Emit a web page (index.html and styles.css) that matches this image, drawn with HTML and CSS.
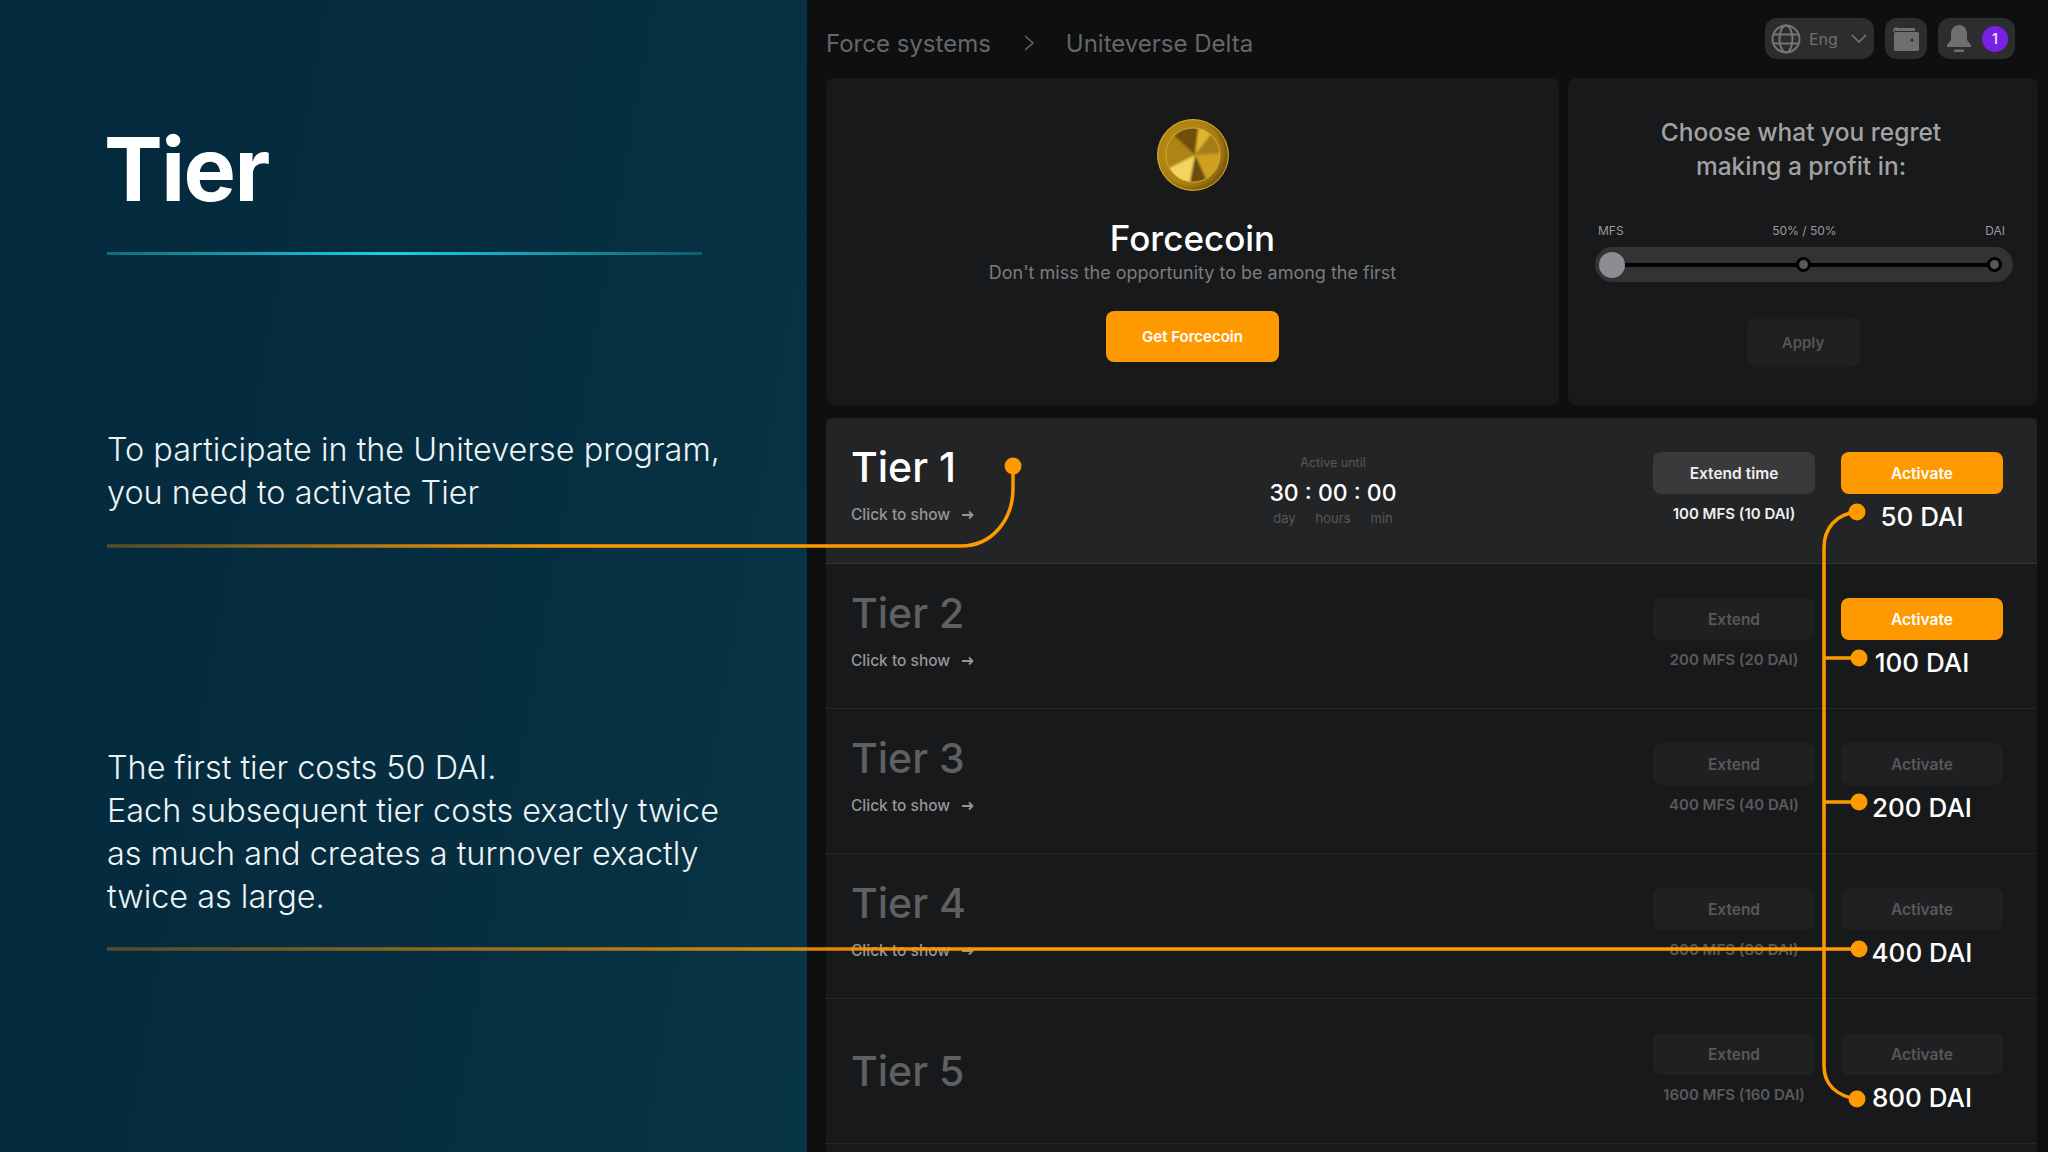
FILE: index.html
```html
<!DOCTYPE html>
<html lang="en">
<head>
<meta charset="utf-8">
<title>Tier</title>
<link rel="stylesheet" href="styles.css">
</head>
<body>
<div class="page">
  <aside class="intro">
    <h1 class="intro-title">Tier</h1>
    <div class="intro-rule"></div>
    <p class="intro-text intro-text-first">To participate in the Uniteverse program,<br>you need to activate Tier</p>
    <p class="intro-text intro-text-second">The first tier costs 50 DAI.<br>Each subsequent tier costs exactly twice<br>as much and creates a turnover exactly<br>twice as large.</p>
  </aside>

  <main class="app">
    <header class="topbar">
      <nav class="crumbs">
        <span class="crumb crumb-first">Force systems</span>
        <svg class="crumb-sep" viewBox="0 0 12 16" width="12" height="16"><path d="M2 1l8 7-8 7" fill="none" stroke="#666" stroke-width="1.5"/></svg>
        <span class="crumb">Uniteverse Delta</span>
      </nav>
      <div class="tools">
        <div class="tool tool-lang">
          <svg viewBox="0 0 30 30" width="30" height="30" fill="none" stroke="#757575" stroke-width="2"><circle cx="15" cy="15" r="13.5"/><ellipse cx="15" cy="15" rx="6.5" ry="13.5"/><path d="M2.500 10.500h25M2.500 19.500h25"/></svg>
          <span class="lang-label">Eng</span>
          <svg viewBox="0 0 16 10" width="16" height="10"><path d="M1 1l7 7 7-7" fill="none" stroke="#757575" stroke-width="1.6"/></svg>
        </div>
        <div class="tool tool-wallet">
          <svg viewBox="0 0 26 24" width="26" height="24"><path d="M3 1h19v3H3z" fill="#6f6f6f"/><rect x="1" y="5" width="25" height="19" rx="1.5" fill="#6f6f6f"/><path d="M1 4.500C1 2 2 1 4 1" fill="none" stroke="#6f6f6f" stroke-width="2"/><circle cx="19" cy="13" r="1.6" fill="#2c2d2e"/></svg>
        </div>
        <div class="tool tool-bell">
          <svg viewBox="0 0 24 27" width="24" height="27"><path d="M12 0c5 0 8 4 8 9v6l4 5v2H0v-2l4-5V9c0-5 3-9 8-9z" fill="#6f6f6f"/><rect x="7" y="24.500" width="10" height="2.500" rx="1" fill="#6f6f6f"/></svg>
          <span class="badge">1</span>
        </div>
      </div>
    </header>

    <section class="cards">
      <article class="card card-coin">
        <svg class="coin" viewBox="0 0 72 72" width="72" height="72">
          <defs>
            <radialGradient id="coinFill" cx="42%" cy="45%" r="62%">
              <stop offset="0" stop-color="#c79a1c"/>
              <stop offset=".72" stop-color="#ab8012"/>
              <stop offset="1" stop-color="#5f4405"/>
            </radialGradient>
            <clipPath id="coinInner"><circle cx="36" cy="36" r="27"/></clipPath>
            <filter id="coinSoft" x="-10%" y="-10%" width="120%" height="120%"><feGaussianBlur stdDeviation="1.3"/></filter>
          </defs>
          <circle cx="36" cy="36" r="36" fill="url(#coinFill)"/>
          <g clip-path="url(#coinInner)">
            <rect x="6" y="6" width="60" height="60" fill="#a87e14"/>
            <g filter="url(#coinSoft)">
              <path d="M38 36L14 14l8-10h20z" fill="#6f5008"/>
              <path d="M38 36l4-32 16 6z" fill="#e0b330"/>
              <path d="M38 36l20-26 8 24z" fill="#a67c14"/>
              <path d="M38 36l28-2-2 26-14 2z" fill="#cda024"/>
              <path d="M38 36l12 26-8 6H32z" fill="#6b4d08"/>
              <path d="M38 36L32 68 8 56l6-8z" fill="#f3d45f"/>
              <path d="M38 36L14 48l-10-8V20l10-6z" fill="#ad8418"/>
            </g>
          </g>
          <circle cx="36" cy="36" r="35.300" fill="none" stroke="#d9ac38" stroke-width="1"/>
          <circle cx="36" cy="36" r="27" fill="none" stroke="#dcb040" stroke-width=".8"/>
        </svg>
        <h2 class="coin-name">Forcecoin</h2>
        <p class="coin-sub">Don't miss the opportunity to be among the first</p>
        <button class="btn btn-get">Get Forcecoin</button>
      </article>

      <article class="card card-split">
        <h2 class="split-title">Choose what you regret<br>making a profit in:</h2>
        <div class="split-labels"><span>MFS</span><span>50% / 50%</span><span>DAI</span></div>
        <div class="slider">
          <div class="slider-line">
            <span class="knob"></span>
            <span class="stop stop-mid"></span>
            <span class="stop stop-end"></span>
          </div>
        </div>
        <button class="btn btn-apply">Apply</button>
      </article>
    </section>

    <section class="tiers">
      <div class="tier tier-active">
        <div class="tier-info">
          <h3 class="tier-name">Tier 1</h3>
          <div class="show">Click to show <svg viewBox="0 0 12 10" width="12" height="10"><path d="M0 5h10M7 1.500L10.500 5 7 8.500" fill="none" stroke="currentColor" stroke-width="1.800"/></svg></div>
        </div>
        <div class="timer">
          <div class="timer-cap">Active until</div>
          <div class="timer-value">30 : 00 : 00</div>
          <div class="timer-units"><span>day</span><span>hours</span><span>min</span></div>
        </div>
        <div class="col col-extend">
          <button class="btn btn-row btn-extend-on">Extend time</button>
          <div class="price price-on">100 MFS (10 DAI)</div>
        </div>
        <div class="col col-activate">
          <button class="btn btn-row btn-on">Activate</button>
          <div class="dai">50 DAI</div>
        </div>
      </div>

      <div class="tier">
        <div class="tier-info">
          <h3 class="tier-name">Tier 2</h3>
          <div class="show">Click to show <svg viewBox="0 0 12 10" width="12" height="10"><path d="M0 5h10M7 1.500L10.500 5 7 8.500" fill="none" stroke="currentColor" stroke-width="1.800"/></svg></div>
        </div>
        <div class="col col-extend">
          <button class="btn btn-row btn-off">Extend</button>
          <div class="price">200 MFS (20 DAI)</div>
        </div>
        <div class="col col-activate">
          <button class="btn btn-row btn-on">Activate</button>
          <div class="dai">100 DAI</div>
        </div>
      </div>

      <div class="tier">
        <div class="tier-info">
          <h3 class="tier-name">Tier 3</h3>
          <div class="show">Click to show <svg viewBox="0 0 12 10" width="12" height="10"><path d="M0 5h10M7 1.500L10.500 5 7 8.500" fill="none" stroke="currentColor" stroke-width="1.800"/></svg></div>
        </div>
        <div class="col col-extend">
          <button class="btn btn-row btn-off">Extend</button>
          <div class="price">400 MFS (40 DAI)</div>
        </div>
        <div class="col col-activate">
          <button class="btn btn-row btn-off">Activate</button>
          <div class="dai">200 DAI</div>
        </div>
      </div>

      <div class="tier">
        <div class="tier-info">
          <h3 class="tier-name">Tier 4</h3>
          <div class="show">Click to show <svg viewBox="0 0 12 10" width="12" height="10"><path d="M0 5h10M7 1.500L10.500 5 7 8.500" fill="none" stroke="currentColor" stroke-width="1.800"/></svg></div>
        </div>
        <div class="col col-extend">
          <button class="btn btn-row btn-off">Extend</button>
          <div class="price">800 MFS (80 DAI)</div>
        </div>
        <div class="col col-activate">
          <button class="btn btn-row btn-off">Activate</button>
          <div class="dai">400 DAI</div>
        </div>
      </div>

      <div class="tier">
        <div class="tier-info tier-info-solo">
          <h3 class="tier-name">Tier 5</h3>
        </div>
        <div class="col col-extend">
          <button class="btn btn-row btn-off">Extend</button>
          <div class="price">1600 MFS (160 DAI)</div>
        </div>
        <div class="col col-activate">
          <button class="btn btn-row btn-off">Activate</button>
          <div class="dai">800 DAI</div>
        </div>
      </div>
    </section>
  </main>

  <svg class="wires" viewBox="0 0 2048 1152" width="2048" height="1152" fill="none">
    <defs>
      <linearGradient id="wireA" gradientUnits="userSpaceOnUse" x1="107" y1="0" x2="560" y2="0">
        <stop offset="0" stop-color="#ff9900" stop-opacity=".3"/>
        <stop offset="1" stop-color="#ff9900"/>
      </linearGradient>
      <linearGradient id="wireB" gradientUnits="userSpaceOnUse" x1="107" y1="0" x2="1000" y2="0">
        <stop offset="0" stop-color="#ff9900" stop-opacity=".3"/>
        <stop offset="1" stop-color="#ff9900"/>
      </linearGradient>
    </defs>
    <path d="M107 546H961C992 546 1013 520 1013 488V466" stroke="url(#wireA)" stroke-width="3.500"/>
    <path d="M107 949H1859" stroke="url(#wireB)" stroke-width="3.500"/>
    <path d="M1857 512C1836 514 1824 528 1824 548V1066C1824 1084 1836 1096 1857 1099" stroke="#ff9900" stroke-width="3.500"/>
    <path d="M1824 658H1859M1824 802H1859" stroke="#ff9900" stroke-width="3.500"/>
    <g fill="#ff9900">
      <circle cx="1013" cy="466" r="8.500"/>
      <circle cx="1857" cy="512" r="8.500"/>
      <circle cx="1859" cy="658" r="8.500"/>
      <circle cx="1859" cy="802" r="8.500"/>
      <circle cx="1859" cy="949" r="8.500"/>
      <circle cx="1857" cy="1099" r="8.500"/>
    </g>
  </svg>
</div>
</body>
</html>
```

FILE: styles.css
```css
* { box-sizing: border-box; }

html, body {
  margin: 0;
  padding: 0;
  width: 2048px;
  height: 1152px;
  overflow: hidden;
  background: #0e0f11;
  font-family: Inter, "Liberation Sans", sans-serif;
}

h1, h2, h3, p { margin: 0; font-weight: normal; }

.page {
  position: relative;
  display: flex;
  width: 2048px;
  height: 1152px;
}

/* Left intro panel */
.intro {
  width: 807px;
  flex: none;
  padding: 121px 0 0 107px;
  background: linear-gradient(100deg, #04293c 0%, #062d40 55%, #083546 100%);
  color: #fff;
}

.intro-title {
  margin-left: -3px;
  font-size: 88px;
  line-height: 96px;
  font-weight: 700;
  letter-spacing: -1.500px;
}

.intro-rule {
  width: 595px;
  height: 3px;
  margin-top: 35px;
  background: linear-gradient(90deg, #0f6d7c 0%, #19d2e8 48%, #0e5f6e 100%);
}

.intro-text {
  font-size: 32.400px;
  line-height: 43px;
  font-weight: 300;
  color: #eef4f6;
}

.intro-text-first { margin-top: 173px; }
.intro-text-second { margin-top: 232px; }

/* Application side */
.app {
  width: 1241px;
  flex: none;
  display: flex;
  flex-direction: column;
  padding-left: 19px;
}

.topbar {
  height: 78px;
  display: flex;
  justify-content: space-between;
  padding: 18px 33px 0 0;
}

.crumbs {
  display: flex;
  align-items: center;
  height: 50px;
  font-size: 24px;
  color: #666768;
}

.crumb-sep { margin: 0 31px 0 32px; }

.tools {
  display: flex;
  gap: 11px;
  height: 41px;
}

.tool {
  display: flex;
  align-items: center;
  border-radius: 12px;
  background: #2c2d2e;
}

.tool-lang { width: 109px; padding-left: 6px; }
.lang-label { margin: 0 12px 0 8px; font-size: 16px; color: #6f6f6f; width: 30px; }
.tool-wallet { width: 42px; justify-content: center; }
.tool-bell { width: 77px; padding-left: 9px; gap: 11px; }

.badge {
  width: 26px;
  height: 26px;
  border-radius: 50%;
  background: #7a1fe6;
  color: #e8dcf8;
  font-size: 14px;
  font-weight: 600;
  line-height: 26px;
  text-align: center;
}

.cards {
  display: flex;
  gap: 9px;
  height: 327px;
}

.card {
  background: #18191b;
  border-radius: 8px;
  display: flex;
  flex-direction: column;
  align-items: center;
}

.card-coin { width: 733px; padding-top: 41px; }
.card-split { width: 470px; padding-top: 37px; }

.coin { display: block; }

.coin-name {
  margin-top: 25px;
  font-size: 35px;
  line-height: 44px;
  font-weight: 500;
  color: #fff;
}

.coin-sub {
  margin-top: 0;
  font-size: 18px;
  line-height: 26px;
  color: #7b7c7d;
}

.btn {
  display: block;
  border: 0;
  border-radius: 8px;
  padding: 0;
  font-family: inherit;
  font-size: 15px;
  font-weight: 600;
  text-align: center;
}

.btn-get {
  width: 173px;
  height: 51px;
  margin-top: 25px;
  background: #ff9900;
  color: #fff;
}

.split-title {
  margin-left: -4px;
  font-size: 24.500px;
  line-height: 34px;
  font-weight: 500;
  text-align: center;
  color: #a2a2a3;
}

.split-labels {
  display: flex;
  justify-content: space-between;
  align-self: stretch;
  margin: 40px 33px 0 30px;
  font-size: 12px;
  line-height: 16px;
  color: #9a9a9b;
}

.slider {
  align-self: stretch;
  height: 35px;
  margin: 8px 25px 0 27px;
  padding: 0 18px;
  border-radius: 18px;
  background: #333335;
  display: flex;
  align-items: center;
}

.slider-line {
  flex: 1;
  height: 4px;
  background: #000;
  display: flex;
  justify-content: space-between;
  align-items: center;
}

.knob {
  width: 26px;
  height: 26px;
  margin-left: -14px;
  border-radius: 50%;
  background: #8d8c90;
}

.stop {
  width: 15px;
  height: 15px;
  border-radius: 50%;
  border: 3px solid #000;
  background: #58585a;
}

.stop-mid { margin-right: 6px; }
.stop-end { margin-right: -7px; }

.btn-apply {
  width: 113px;
  height: 50px;
  margin-top: 35px;
  background: #1e1f21;
  color: #565657;
}

/* Tier rows */
.tiers {
  flex: 1;
  margin-top: 13px;
  width: 1211px;
  background: #18191b;
  overflow: hidden;
}

.tier {
  display: flex;
  height: 145px;
  padding: 34px 34px 0 25px;
  border-bottom: 1px solid #262729;
}

.tier-active {
  height: 146px;
  background: #232426;
  border-radius: 8px 8px 0 0;
  border-bottom-color: #323335;
}

.tier-info { width: 361px; flex: none; }
.tier-info-solo { padding-top: 23px; }

.tier-name {
  font-size: 41px;
  line-height: 30px;
  font-weight: 500;
  color: #5f6061;
}

.tier-active .tier-name { color: #fff; }

.show {
  margin-top: 22px;
  display: flex;
  align-items: center;
  gap: 12px;
  font-size: 15.500px;
  line-height: 22px;
  font-weight: 500;
  color: #969697;
}

.timer {
  width: 242px;
  flex: none;
  text-align: center;
}

.timer-cap {
  margin-bottom: 4px;
  font-size: 12.500px;
  line-height: 22px;
  color: #57585a;
}

.timer-value {
  font-size: 23px;
  line-height: 30px;
  font-weight: 500;
  color: #fff;
}

.timer-units {
  display: flex;
  justify-content: center;
  gap: 20px;
  font-size: 13px;
  line-height: 20px;
  color: #57585a;
}

.col { width: 162px; flex: none; text-align: center; }
.col-extend { margin-left: auto; }
.col-activate { margin-left: 26px; }

.btn-row { width: 162px; height: 42px; font-size: 15.500px; }
.btn-on { background: #ff9900; color: #fff; }
.btn-off { background: #1f2022; color: #58585a; }
.btn-extend-on { background: #3a3a3c; color: #eee; }

.price {
  margin-top: 9px;
  font-size: 15px;
  line-height: 22px;
  font-weight: 600;
  color: #5a5a5c;
}

.price-on { color: #eee; }

.dai {
  margin-top: 6px;
  font-size: 26px;
  line-height: 34px;
  font-weight: 500;
  color: #fff;
}

.wires {
  position: absolute;
  left: 0;
  top: 0;
  pointer-events: none;
}
```
